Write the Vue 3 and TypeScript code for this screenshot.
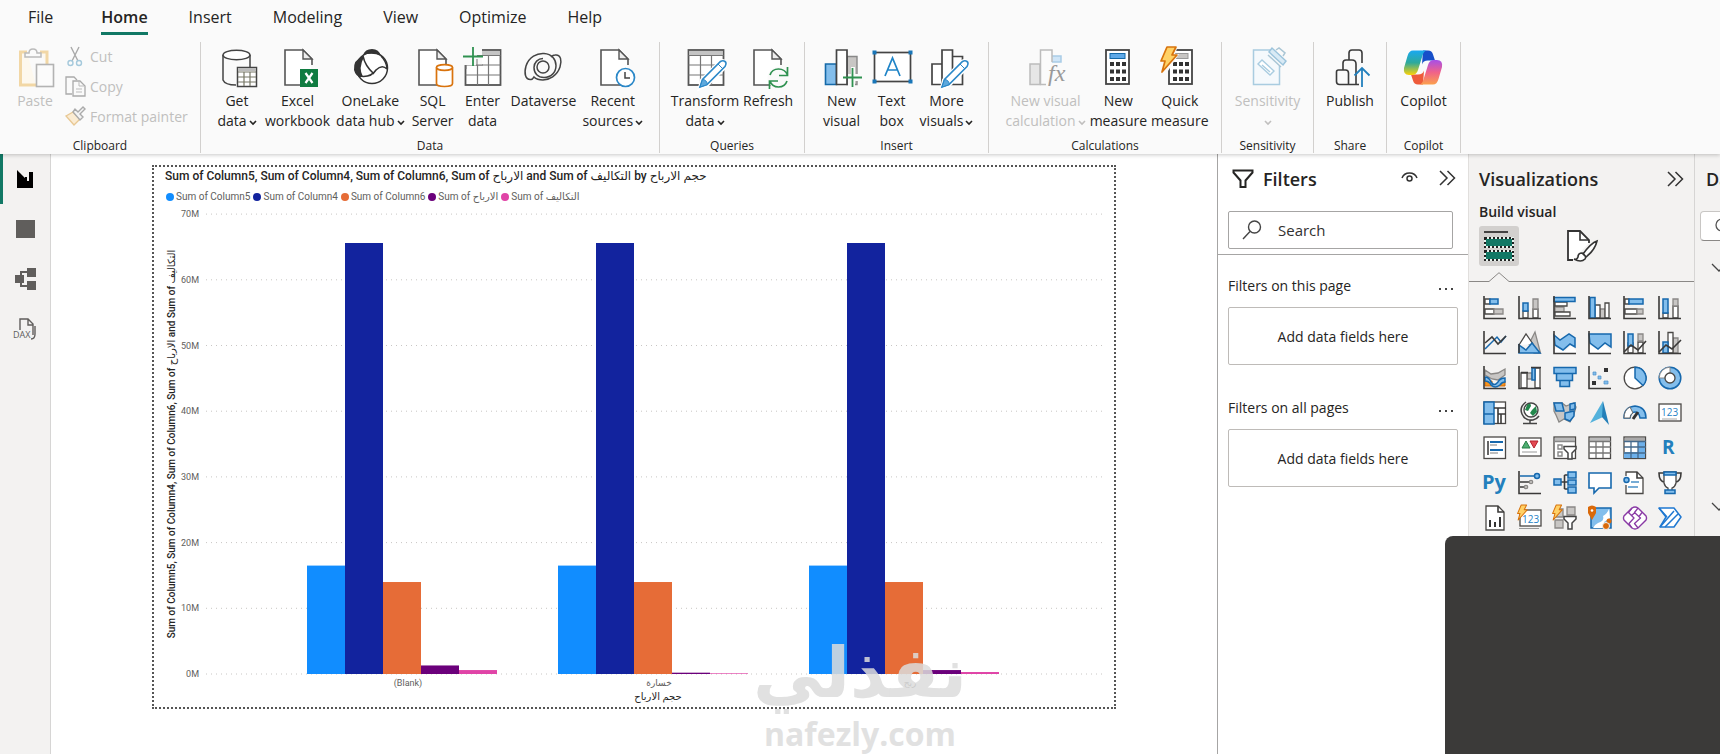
<script setup lang="ts">
interface RibbonItem {
  lines: string[]
  icon: string
  chevron?: boolean
  disabled?: boolean
}
interface RibbonGroup {
  name: string
  key: string
  items: RibbonItem[]
}

const tabs = ['File', 'Home', 'Insert', 'Modeling', 'View', 'Optimize', 'Help']

const pageShape = (x: number) =>
  `<path d="M${x} 3h18l8 9v26h-26z" fill="#fff" stroke="none"/><path d="M${x + 20} 38H${x}V3h18l9 9v6" fill="none" stroke="#555" stroke-width="1.6"/><path d="M${x + 18} 3v9h9z" fill="#eee" stroke="#555" stroke-width="1.4"/>`
const pencil =
  '<path d="M15 41l2-8 18-18q3-2 5 0t0 5l-18 18z" fill="#fff" stroke="#fff" stroke-width="4"/><path d="M15 40l2.500-7.500 18-18q2.500-1.500 4.500 0t0 5l-18 18z" fill="#fff" stroke="#2b88c8" stroke-width="1.600"/><path d="M15 40l2.500-7.500q4 0 5 5z" fill="#5ea9dd" stroke="#2b88c8"/><path d="M33 17l5 5" stroke="#2b88c8"/>'
const calculator = (x: number, screen: string) => {
  let keys = ''
  for (let r = 0; r < 3; r++)
    for (let c = 0; c < 3; c++)
      keys += `<rect x="${x + 4 + c * 6}" y="${15 + r * 7.5}" width="4" height="4" fill="#333"/>`
  return `<rect x="${x}" y="3" width="23" height="34" fill="#fff" stroke="#444" stroke-width="1.8"/><rect x="${x + 4}" y="6.500" width="15" height="5" ${screen}/>${keys}`
}
const bolt = (s: string) =>
  `<path transform="${s}" d="M7 0h9l-4 8h5L2 25l3-11H1z" fill="#ffd166" stroke="#d8730c" stroke-width="1.7" stroke-linejoin="round"/>`
const table = (x: number) =>
  `<rect x="${x}" y="3" width="35" height="35" fill="#fff" stroke="#555" stroke-width="1.800"/><rect x="${x + 1}" y="4" width="33" height="4" fill="#c4c4c4"/><path d="M${x} 8.500h35M${x} 18h35M${x} 28h35M${x + 12} 9v29M${x + 23} 9v29" fill="none" stroke="#777" stroke-width="1.200"/>`

const pasteIcon =
  '<g transform="translate(4 0)"><path d="M8 5H1.500v33H17M21 5h7v13" fill="#fdf8ee" stroke="#f2d7a5" stroke-width="3"/><path d="M6 10V6h4q0-4 4-4t4 4h4v4z" fill="#fafafa" stroke="#bbb" stroke-width="1.500"/><rect x="17.500" y="17.500" width="17" height="22" fill="#fbfbfb" stroke="#b3b3b3" stroke-width="1.600"/></g>'
const smallActions = [
  {
    text: 'Cut',
    icon: '<path d="M6 1l7 14M14 1L7 15" stroke="#a9a9a9" stroke-width="1.400"/><circle cx="5.500" cy="17" r="2.500" fill="none" stroke="#a5c9dc" stroke-width="1.400"/><circle cx="14" cy="17" r="2.500" fill="none" stroke="#a5c9dc" stroke-width="1.400"/>',
  },
  {
    text: 'Copy',
    icon: '<path d="M7 18H1V1h8l3 3" fill="none" stroke="#aaa" stroke-width="1.300"/><path d="M8 5h7l5 5v10H8z" fill="#fafafa" stroke="#aaa" stroke-width="1.300"/><path d="M14 5v5h5M11 13h6M11 16h6" fill="none" stroke="#bbb"/>',
  },
  {
    text: 'Format painter',
    icon: '<path d="M1 10l7-4 7 7-6 6z" fill="#fbecd3" stroke="#e8c894" stroke-width="1.400"/><path d="M8 6l2-3 3 3 5-5 2 2-5 5 3 3-3 3z" fill="#f4f4f4" stroke="#aaa" stroke-width="1.400"/>',
  },
]

const groups: RibbonGroup[] = [
  {
    name: 'Data',
    key: 'data',
    items: [
      {
        lines: ['Get', 'data'],
        chevron: true,
        icon: '<path d="M6 8v25q2 5 13 5M33 8v12" fill="none" stroke="#444" stroke-width="1.500"/><ellipse cx="19.500" cy="8" rx="13.500" ry="4.800" fill="#fff" stroke="#444" stroke-width="1.500"/><rect x="20.500" y="20.500" width="19" height="19" fill="#fff" stroke="#444" stroke-width="1.500"/><rect x="21" y="21" width="18" height="3" fill="#bbb"/><path d="M21 25h18M21 30h18M21 35h18M27 25v14M33 25v14" stroke="#776" stroke-width="1.200"/>',
      },
      {
        lines: ['Excel', 'workbook'],
        icon:
          pageShape(7) +
          '<rect x="22" y="22" width="18" height="18" fill="#107c41"/><path d="M27.500 26l7 10M34.500 26l-7 10" stroke="#fff" stroke-width="2.200"/>',
      },
      {
        lines: ['OneLake', 'data hub'],
        chevron: true,
        icon: '<circle cx="22" cy="21" r="15.500" fill="#fff" stroke="#333" stroke-width="1.500"/><path d="M13 8q2-6 9-6t9 7q-8-4-18-1zM13 9Q3 13 4 23q2 8 9 7-5-9 1-20z" fill="#333"/><path d="M13 9q2 10 11 18M9 29q12 2 17-6 6-6 11-1M31 9q5 5 6 12" fill="none" stroke="#333" stroke-width="1.500"/>',
      },
      {
        lines: ['SQL', 'Server'],
        icon:
          pageShape(6) +
          '<path d="M23.500 20.500v16q0 3 8 3t8-3v-16" fill="#fff" stroke="#d9730d" stroke-width="1.700"/><ellipse cx="31.500" cy="20.500" rx="8" ry="2.800" fill="#fff" stroke="#d9730d" stroke-width="1.700"/>',
      },
      {
        lines: ['Enter', 'data'],
        icon:
          table(2.5) +
          '<path d="M0 1h19v17H0z" fill="#fafafa"/><path d="M13 18h7M3 18v4M14 12v7M14 8.500h7" stroke="#777"/><path d="M0 9.500h20M10 0v19" stroke="#2f9150" stroke-width="1.800"/>',
      },
      {
        lines: ['Dataverse'],
        icon: '<g fill="none" stroke="#444" stroke-width="1.500"><circle cx="20" cy="20" r="6"/><path d="M8 32.500C2 33 1 26 3 19 6 10 14 6 21 6.500c8 .5 12 6 12 12 0 7-5 12-12 12-6 0-10-4-10-10 0-5 4-9 9-9"/><path d="M32 8c6-1 7 6 5 12-3 9-11 13-17 13-4 0-7-1-9-3-1 1.500-2 2.500-3 2.500M32 8c-2 0-3 1-4 2"/></g>',
      },
      {
        lines: ['Recent', 'sources'],
        chevron: true,
        icon:
          pageShape(8) +
          '<circle cx="32.500" cy="30.500" r="9" fill="#fff" stroke="#2b88c8" stroke-width="1.700"/><path d="M32 25v6h5" fill="none" stroke="#444" stroke-width="1.500"/>',
      },
    ],
  },
  {
    name: 'Queries',
    key: 'queries',
    items: [
      { lines: ['Transform', 'data'], chevron: true, icon: table(3.5) + pencil },
      {
        lines: ['Refresh'],
        icon:
          pageShape(6) +
          '<circle cx="30.500" cy="31" r="11" fill="#fafafa"/><path d="M22 28q2-6 8.500-6t9 6M39.500 20v8.500H31M39 34q-2 6-8.500 6t-8.500-6M21.500 42v-8H30" fill="none" stroke="#2f9150" stroke-width="1.700"/>',
      },
    ],
  },
  {
    name: 'Insert',
    key: 'insert',
    items: [
      {
        lines: ['New', 'visual'],
        icon: '<path d="M25 9.500h10v28H25z" fill="#c8c6c4" stroke="#888" stroke-width="1.400"/><path d="M3.500 17h11v20.500h-11z" fill="#83beec" stroke="#1469a8" stroke-width="1.600"/><path d="M14.500 3h10.500v34.500H14.500z" fill="#fff" stroke="#444" stroke-width="1.700"/><path d="M26 27h3v-7h4v7h6v7h-6v5h-7z" fill="#fafafa"/><path d="M21 30.500h19M30.500 21v19" stroke="#2f9150" stroke-width="1.800"/>',
      },
      {
        lines: ['Text', 'box'],
        icon: '<rect x="2.500" y="5.500" width="36" height="29" fill="#fff" stroke="#444" stroke-width="1.700"/><path d="M.5 3.500h4v4h-4zM36.500 3.500h4v4h-4zM.5 32.500h4v4h-4zM36.500 32.500h4v4h-4z" fill="#1976b8"/><path d="M13 29l7.500-18L28 29M15.500 23h10" fill="none" stroke="#1f84c7" stroke-width="1.700"/>',
      },
      {
        lines: ['More', 'visuals'],
        chevron: true,
        icon:
          '<path d="M5 17h10v20.500H5zM25.500 9.500h10v28h-10zM15 3h10.500v34.500H15z" fill="#fff" stroke="#444" stroke-width="1.700"/>' +
          pencil,
      },
    ],
  },
  {
    name: 'Calculations',
    key: 'calculations',
    items: [
      {
        lines: ['New visual', 'calculation'],
        chevron: true,
        disabled: true,
        icon: '<path d="M4 17h10v20.500H4z" fill="#e6e6e6" stroke="#bcbcbc" stroke-width="1.500"/><path d="M25 9h10v6H25z" fill="#cfe5f7" stroke="#a9cce6" stroke-width="1.500"/><path d="M26 15V3H14.500v34.500H20" fill="#fbfbfb" stroke="#bcbcbc" stroke-width="1.500"/><text x="22" y="34" font-family="Liberation Serif, serif" font-style="italic" font-size="24" fill="#999">fx</text>',
      },
      { lines: ['New', 'measure'], icon: calculator(8, 'fill="#5ea9e8" stroke="#1469a8"') },
      {
        lines: ['Quick', 'measure'],
        icon:
          calculator(9, 'fill="#c8c6c4" stroke="#999"') +
          '<path d="M6-1h12l-3 8h4L6 27-1 25z" fill="#fafafa"/>' +
          bolt(''),
      },
    ],
  },
  {
    name: 'Sensitivity',
    key: 'sensitivity',
    items: [
      {
        lines: ['Sensitivity', ''],
        chevron: true,
        disabled: true,
        icon: '<path d="M24 3H6.500v34.500h26V19" fill="#f5f9fc" stroke="#a9cce0" stroke-width="1.500"/><path d="M11 17l4-4 12 11-4 4zM15 18l8 7" fill="#fff" stroke="#a9cce0" stroke-width="1.400"/><path d="M22 5l3-4 14 13-3 4z" fill="#d9eaf5" stroke="#9cc4dc" stroke-width="1.500"/><path d="M21 8l13 12M29 3l3-2 6 5-2 3" fill="none" stroke="#aac6d5" stroke-width="1.500"/>',
      },
    ],
  },
  {
    name: 'Share',
    key: 'share',
    items: [
      {
        lines: ['Publish'],
        icon: '<path d="M19 13V6q0-3 3-3h7q3 0 3 3v10M13 23v-7q0-3 3-3h6q4 0 4 4v20M8.500 23h7q3 0 3 3v11.500h-9q-3 0-3-3V25q0-2 2-2zM18 37.500h11" fill="none" stroke="#3b3b3b" stroke-width="1.600"/><path d="M32 40V21M24.500 28.500L32 21l7.500 7.500" fill="none" stroke="#2380bd" stroke-width="1.800"/>',
      },
    ],
  },
  {
    name: 'Copilot',
    key: 'copilot',
    items: [
      {
        lines: ['Copilot'],
        icon: '<defs><linearGradient id="ca" x1="0" y1="0" x2="0" y2="1"><stop offset="0" stop-color="#18a8f2"/><stop offset=".5" stop-color="#2ea99b"/><stop offset="1" stop-color="#fdd207"/></linearGradient><linearGradient id="cb" x1="0" y1="0" x2="0" y2="1"><stop offset="0" stop-color="#a64fe8"/><stop offset=".5" stop-color="#f0628a"/><stop offset="1" stop-color="#fba04c"/></linearGradient></defs><path d="M20 3.500h5q4 0 5 4l2 6h-7q-5 0-6 4z" fill="#174fc9"/><path d="M20 37.500h-5q-4 0-5-4l-2-6h7q5 0 6-4z" fill="#ee5b3a"/><path d="M10 3.500h14q-3 0-4.500 5L15 23q-1.500 5-6 5H6q-6 0-5-7L4.500 9Q6 3.500 10 3.500z" fill="url(#ca)"/><path d="M30 37.500H16q3 0 4.500-5L25 18q1.500-5 6-5h3q6 0 5 7l-3.500 12q-1.500 5.500-5.500 5.500z" fill="url(#cb)"/>',
      },
    ],
  },
]

const rail = [
  {
    label: 'Report view',
    icon: '<path d="M2 2l3 3 5 5V9h2v4h2V4h4v16H2z" fill="#000"/>',
  },
  { label: 'Table view', icon: '<path d="M1 2h19v18H1z" fill="#605e5c"/>' },
  {
    label: 'Model view',
    icon: '<path d="M6 8V4h6M6 14v4h7" fill="none" stroke="#605e5c" stroke-width="2"/><path d="M0 7h9v8H0zM12 0h9v9h-9zM12 13h9v9h-9z" fill="#605e5c"/>',
  },
  {
    label: 'DAX query view',
    icon: '<path d="M5 12V1h8l5 5v11M13 1v6h5M20 8v8q0 5-4 5" fill="none" stroke="#605e5c" stroke-width="1.400"/><text x="-2" y="20" font-family="Open Sans, sans-serif" font-size="9" fill="#605e5c">DAX</text>',
  },
]

// Chart data, in millions
const series = [
  { name: 'Sum of Column5', color: '#118dff' },
  { name: 'Sum of Column4', color: '#12239e' },
  { name: 'Sum of Column6', color: '#e66c37' },
  { name: 'Sum of الارباح', color: '#6b007b' },
  { name: 'Sum of التكاليف', color: '#e044a7' },
]
const categories = [
  { name: '(Blank)', values: [16.5, 65.6, 14, 1.3, 0.6] },
  { name: 'خسارة', values: [16.5, 65.6, 14, 0.2, 0.1] },
  { name: 'ربح', values: [16.5, 65.6, 14, 0.6, 0.3] },
]
const ticks = [70, 60, 50, 40, 30, 20, 10, 0]
const baseline = 468
const perMillion = 6.57
const barWidth = 38
const groupX = (i: number) => 153 + i * 251
const yOf = (v: number) => baseline - v * perMillion

// Visual gallery
const B = 'fill="#83beec" stroke="#1668ad" stroke-width="1.500"'
const G = 'fill="#c8c6c4" stroke="#8a8886" stroke-width="1.300"'
const W = 'fill="#fff" stroke="#4a4846" stroke-width="1.300"'
const N = 'fill="none" stroke="#3b3a39" stroke-width="1.600"'
const NG = 'fill="none" stroke="#888" stroke-width="1.400"'
const axes = `<path d="M1 0v22.500h22" ${N}/>`
const frame = `<rect x="1" y="1" width="21.500" height="21.500" ${W}/>`
const miniBolt = bolt('translate(-1 -1) scale(.6)')
const funnel = `<path d="M11 10.500h12v2.500l-4 4v6h-4v-6l-4-4z" fill="#fff" stroke="#444" stroke-width="1.500"/>`

const visuals: { name: string; icon: string }[] = [
  { name: 'Stacked bar chart', icon: `<path d="M2 3h5v5H2zM2 13h9v5H2z" ${W}/><path d="M7 3h8v5H7z" ${B}/><path d="M11 13h9v5h-9z" ${G}/>${axes}` },
  { name: 'Stacked column chart', icon: `<path d="M5 15h5v7H5zM15 13h5v9h-5z" ${W}/><path d="M5 7h5v8H5z" ${B}/><path d="M15 3h5v10h-5z" ${G}/>${axes}` },
  { name: 'Clustered bar chart', icon: `<path d="M2 11h9v5H2z" ${G}/><path d="M2 6h12v4H2zM2 16h15v4H2z" ${W}/><path d="M1 1.500h21v4H1z" ${B}/>${axes}` },
  { name: 'Clustered column chart', icon: `<path d="M12 13h5v9h-5z" ${G}/><path d="M7 9h5v13H7zM17 7h4v15h-4z" ${W}/><path d="M2 1.500h5V22H2z" ${B}/>${axes}` },
  { name: '100% stacked bar chart', icon: `<path d="M2 3h4v5H2zM2 13h12v5H2z" ${W}/><path d="M6 3h14v5H6z" ${B}/><path d="M14 13h6v5h-6z" ${G}/>${axes}` },
  { name: '100% stacked column chart', icon: `<path d="M5 17h5v5H5zM15 10h5v12h-5z" ${W}/><path d="M5 3h5v14H5z" ${B}/><path d="M15 3h5v7h-5z" ${G}/>${axes}` },
  { name: 'Line chart', icon: `<path d="M2 18l12-12 4 5 5-6" fill="none" stroke="#1668ad" stroke-width="1.500"/><path d="M2 12l7-6 6 7 8-8" ${N}/>${axes}` },
  { name: 'Area chart', icon: `<path d="M11 13l6-12 5.500 21H16z" ${G}/><path d="M1 14L8 3l7 10" ${W}/><path d="M1 14l7 5 6-7 8 10H1z" ${B}/><path d="M1 13v9" ${N}/>` },
  { name: 'Stacked area chart', icon: `<path d="M2 18l5-3 5 5 6-6 5 5v3H2z" fill="#fff"/><path d="M1 4l6 5 9-6 6 4v9l-5-3-7 6-8-5z" ${B}/>${axes}` },
  { name: '100% stacked area chart', icon: `<path d="M2 14l8 5 6-6 6 6v3H2z" fill="#fff"/><path d="M1 3h22v13l-6-4-7 6-8-6z" ${B}/>${axes}` },
  { name: 'Line and stacked column chart', icon: `<path d="M5 12h5v10H5zM15 11h5v11h-5z" ${W}/><path d="M5 3h5v12H5z" ${B}/><path d="M15 3h5v7h-5z" ${G}/><path d="M1 21l7-7 7 5 8-9" ${N}/>${axes}` },
  { name: 'Line and clustered column chart', icon: `<path d="M15 7h5v15h-5z" ${G}/><path d="M10 1.500h5V22h-5z" ${W}/><path d="M5 11h5v11H5z" ${B}/><path d="M1 21l7-7 6 4 9-9" ${N}/>${axes}` },
  { name: 'Ribbon chart', icon: `<path d="M2 4l6 4 7-1 7-4v6l-7 5-6-1-7-4z" ${G}/><path d="M2 15h7v5H2zM16 15h6v5h-6z" fill="#f7941d" stroke="#d36b08"/><path d="M2 11q4 0 6 5 3 5 7 0 2-4 7-4v4q-3 0-5 3-5 4-9 0-2-4-6-4z" ${B}/>${axes}` },
  { name: 'Waterfall chart', icon: `<path d="M9 7h5v6H9z" ${G}/><path d="M3 7h6v15H3zM17 2h5v20h-5z" ${W}/><path d="M14 2h3v12h-3z" ${B}/><path d="M1 0v22.500h22M3 6.500h7M13 1.500h10" ${N}/>` },
  { name: 'Funnel', icon: `<path d="M1 1.500h22v6H1zM3.500 7.500h16v7h-16zM7 14.500h9.500v6H7z" ${B}/>` },
  { name: 'Scatter chart', icon: `<path d="M5 6h3v3H5zM10 10h3v3h-3zM16 15h4v3h-4z" fill="#83beec" stroke="#4b91c8" stroke-width=".7"/><path d="M16 2h4v4h-4zM4 15h4v4H4z" fill="#333"/>${axes}` },
  { name: 'Pie chart', icon: `<circle cx="12" cy="12" r="10.800" ${W}/><path d="M12 1.200V12l8 7.500A10.800 10.800 0 0 0 12 1.200z" ${B}/>` },
  { name: 'Donut chart', icon: `<circle cx="12" cy="12" r="10.800" ${B}/><path d="M1.200 12A10.800 10.800 0 0 1 12 1.200V7a5 5 0 0 0-5 5z" fill="#fff" stroke="#888"/><circle cx="12" cy="12" r="5" ${W}/>` },
  { name: 'Treemap', icon: `${frame}<path d="M1 1h10v12H1zM1 13h10v10H1z" ${B}/><path d="M11 7h12M15 7v16M15 13h8M18 13v10" ${N}/>` },
  { name: 'Map', icon: `<circle cx="13" cy="9" r="7" fill="#fff" stroke="#444" stroke-width="1.400"/><path d="M9 4q4-3 4 1l-3 5-3-1zM14 9l4-4 1 6-4 4-3-3z" fill="#22884c"/><path d="M8 1Q1 6 4 13t11 6q4-1 6-4M12 19v3M5 22.500h14" fill="none" stroke="#444" stroke-width="1.500"/>` },
  { name: 'Filled map', icon: `<path d="M1 2h8l4 3 8-3 2 4-2 7-4 8-6-3-5 3-3-7-2-4z" ${G}/><path d="M1 2h8l2 8H3zM12 12l9-2v5l-4 5-5-2zM17 3l5-1v6l-5 1z" ${B}/>` },
  { name: 'Azure map', icon: `<path d="M15 0L2 22l13-6z" fill="#54b2dc"/><path d="M15 0l6 24-7-8z" fill="#237fb8"/>` },
  { name: 'Gauge', icon: `<path d="M1 17q0-11 11-12 11 1 11 12h-6q-1-6-5-6t-5 6z" ${B}/><path d="M1 17h6q0-4 3-5L7 6q-6 3-6 11z" fill="#fff" stroke="#666"/><path d="M10 18l5-7" stroke="#333" stroke-width="3"/>` },
  { name: 'Card', icon: `<rect x="1" y="3" width="22" height="17" ${W}/><text x="3" y="15" font-family="Open Sans, sans-serif" font-size="10" fill="#1f84c7">123</text><path d="M4 18h15" stroke="#aaa"/>` },
  { name: 'Multi-row card', icon: `${frame}<path d="M5 5v14" stroke="#333" stroke-width="1.500"/><path d="M7 6h13M7 14h13" stroke="#1668ad" stroke-width="2.200"/><path d="M7 9h7M7 17h8" stroke="#aaa" stroke-width="1.500"/>` },
  { name: 'KPI', icon: `<rect x="1" y="2" width="22" height="18" ${W}/><path d="M4 12l4-7 4 7z" fill="#4fae72" stroke="#257f45"/><path d="M12 5h8l-4 7z" fill="#e34a53" stroke="#b5222e"/><path d="M4 16h15" stroke="#999"/>` },
  { name: 'Slicer', icon: `${frame}<path d="M2 2h20v3H2z" fill="#bbb"/><path d="M1 5.500h21M5 9h4v4H5zM5 16h4v4H5z" ${NG}/>${funnel}` },
  { name: 'Table', icon: `${frame}<path d="M2 2h20v3H2z" fill="#bbb"/><path d="M1 5.500h22M1 11h22M1 17h22M8 6v16M15 6v16" fill="none" stroke="#777" stroke-width="1.300"/>` },
  { name: 'Matrix', icon: `${frame}<path d="M15 5h7v17H1v-6h14z" fill="#6db0ea"/><path d="M2 2h20v3H2z" fill="#aaa"/><path d="M1 5.500h22M1 11h22M1 17h22M8 6v16M15 6v16" fill="none" stroke="#44698c" stroke-width="1.300"/>` },
  { name: 'R script visual', icon: '<text x="4" y="18" font-family="Open Sans, sans-serif" font-weight="700" font-size="19" fill="#2380bd">R</text>' },
  { name: 'Python visual', icon: '<text x="-1" y="18" font-family="Open Sans, sans-serif" font-weight="700" font-size="20" fill="#2380bd">Py</text>' },
  { name: 'Key influencers', icon: `<path d="M2 5h14" stroke="#1668ad" stroke-width="1.500"/><circle cx="19" cy="5" r="2.500" ${B}/><path d="M2 11h9M2 16h4" ${N}/><circle cx="13" cy="11" r="1.700" ${G}/><circle cx="8" cy="16" r="1.700" ${G}/>${axes}` },
  { name: 'Decomposition tree', icon: `<path d="M8 11h7M11.500 4v14M11.500 4H15M11.500 18H15" ${N}/><path d="M1 8h7v6H1zM15 1h8v6h-8zM15 9h8v5h-8zM15 16h8v6h-8z" ${B}/>` },
  { name: 'Q&A', icon: `<path d="M1 2h22v15H11l-5 5v-5H1z" fill="#fff" stroke="#1668ad" stroke-width="1.600"/>` },
  { name: 'Smart narrative', icon: `<path d="M3 5V1h11l6 6v15.500H3V14" ${W}/><path d="M14 1v6h6" ${N}/><circle cx="3.500" cy="9" r="2.500" ${B}/><path d="M8 11h8M5 16h10" stroke="#4b91c8" stroke-width="1.400"/>` },
  { name: 'Metrics', icon: `<path d="M6 2H1q0 9 6 9M18 2h5q0 9-6 9" ${N}/><path d="M6 1h12v11q-1 4-4 5v3h-4v-3q-3-1-4-5z" ${W}/><path d="M6 1h12v3H6zM7 19h10v3.500H7z" ${B}/>` },
  { name: 'Paginated report', icon: `<path d="M3 0h12l6 6v18H3z" ${W}/><path d="M15 0v6h6" ${N}/><path d="M6 14h2v7H6zM11 16h2v5h-2zM16 11h2v10h-2z" fill="#333"/>` },
  { name: 'Card (new)', icon: `<rect x="2" y="4" width="21" height="16" ${W}/><text x="4" y="17" font-family="Open Sans, sans-serif" font-size="10" fill="#1f84c7">123</text><path d="M1 22.500h20" stroke="#999"/>${miniBolt}` },
  { name: 'Slicer (new)', icon: `<path d="M3 3h7v8H3zM14 1h8v8h-8zM2 14h8v8H2z" ${G}/>${funnel}${miniBolt}` },
  { name: 'ArcGIS Maps', icon: `<path d="M3 2h20v20H3z" ${B}/><path d="M21 3q-2 5-6 7 2 5-5 7-4 2-5 5h12l-1-6 6-4z" fill="#fff"/><path d="M0 1q4-3 8 0v6l-4 7-4-7z" fill="#d9690a"/><circle cx="4" cy="4.500" r="1.300" fill="#fff"/><circle cx="21" cy="15" r="2.500" fill="#d9690a"/><circle cx="18" cy="20" r="3.500" fill="#d9690a" stroke="#f3f2f1"/>` },
  { name: 'Power Apps', icon: `<path d="M9 2q3-2 6 0l8 8q1 2 0 4l-8 8q-3 2-6 0l-8-8q-1-2 0-4z" fill="#fff" stroke="#8a3aa5" stroke-width="1.400"/><path d="M9 2l-3.500 4.500 5.500 5.500-5 5.500L9 22M15 2l-3.500 4.500 6 5.500-6 5.500L15 22M12 6.500L8 10M16 10.500l3-4" fill="none" stroke="#8a3aa5" stroke-width="1.300" stroke-linejoin="round"/>` },
  { name: 'Power Automate', icon: `<path d="M1 2h15l7 9-7 10H2l6-10z" fill="#fff" stroke="#1f78d1" stroke-width="1.500" stroke-linejoin="round"/><path d="M2 21L16 5M7 21L20 8M1 2l8 9" fill="none" stroke="#1f78d1" stroke-width="1.500"/>` },
]
</script>

<template>
  <div class="app">
    <header class="ribbon">
      <nav class="tabs">
        <button v-for="t in tabs" :key="t" class="tab" :class="{ active: t === 'Home' }">{{ t }}</button>
      </nav>
      <div class="groups">
        <section class="group clipboard">
          <div class="items">
            <button class="big disabled" disabled>
              <svg class="big-icon" viewBox="0 0 40 40" v-html="pasteIcon" />
              <span class="line">Paste</span>
            </button>
            <div class="smalls">
              <button v-for="a in smallActions" :key="a.text" class="small" disabled>
                <svg width="21" height="21" viewBox="0 0 21 21" v-html="a.icon" />
                {{ a.text }}
              </button>
            </div>
          </div>
          <h2 class="group-name">Clipboard</h2>
        </section>
        <section v-for="g in groups" :key="g.key" class="group" :class="g.key">
          <div class="items">
            <button v-for="b in g.items" :key="b.lines.join(' ')" class="big" :class="{ disabled: b.disabled }" :disabled="b.disabled">
              <svg class="big-icon" viewBox="0 0 40 40" v-html="b.icon" />
              <span v-for="(l, i) in b.lines" :key="i" class="line">{{ l }}<svg v-if="b.chevron && i === b.lines.length - 1" class="chev" width="8" height="6" viewBox="0 0 8 6"><path d="M1 1l3 3 3-3" fill="none" stroke="currentColor" stroke-width="1.600" /></svg></span>
            </button>
          </div>
          <h2 class="group-name">{{ g.name }}</h2>
        </section>
      </div>
    </header>

    <main class="workspace">
      <nav class="rail">
        <button v-for="(r, i) in rail" :key="r.label" class="rail-item" :class="{ current: i === 0 }" :aria-label="r.label">
          <svg width="22" height="22" viewBox="0 0 22 22" v-html="r.icon" />
        </button>
      </nav>

      <section class="canvas">
        <figure class="chart">
          <figcaption class="chart-title">Sum of Column5, Sum of Column4, Sum of Column6, Sum of الارباح and Sum of التكاليف by حجم الارباح</figcaption>
          <ul class="legend">
            <li v-for="s in series" :key="s.name">
              <svg width="8" height="8" viewBox="0 0 8 8"><circle cx="4" cy="4" r="4" :fill="s.color" /></svg>{{ s.name }}
            </li>
          </ul>
          <svg class="plot" viewBox="0 0 960 501">
            <g v-for="t in ticks" :key="t">
              <line x1="52" x2="951" :y1="yOf(t)" :y2="yOf(t)" class="gridline" />
              <text x="45" :y="yOf(t) + 3" class="tick" text-anchor="end">{{ t }}M</text>
            </g>
            <g v-for="(c, i) in categories" :key="c.name">
              <rect
                v-for="(v, j) in c.values"
                :key="j"
                :x="groupX(i) + j * barWidth"
                :y="yOf(v)"
                :width="barWidth"
                :height="v * perMillion"
                :fill="series[j].color"
              />
              <text :x="groupX(i) + 101" y="480" class="tick" text-anchor="middle">{{ c.name }}</text>
            </g>
            <text x="504" y="494" class="axis-title" text-anchor="middle">حجم الارباح</text>
            <text transform="translate(21 238) rotate(-90)" class="axis-title" text-anchor="middle">Sum of Column5, Sum of Column4, Sum of Column6, Sum of الارباح and Sum of التكاليف</text>
          </svg>
          <div class="watermark">
            <span class="wm-ar" lang="ar">نفذلي</span>
            <span class="wm-en">nafezly.com</span>
          </div>
        </figure>
      </section>

      <aside class="filters">
        <div class="filters-top">
          <header class="pane-head">
            <svg width="22" height="20" viewBox="0 0 22 20"><path d="M1.500 1.500h19v2l-7 8V18h-5v-6.500l-7-8z" fill="none" stroke="#252423" stroke-width="2" /></svg>
            <h2>Filters</h2>
            <button class="icon-btn eye" aria-label="Show filters">
              <svg width="17" height="14" viewBox="0 0 17 14"><path d="M1 6q2-5 7.500-5T16 6" fill="none" stroke="#333" stroke-width="1.500" /><circle cx="8.500" cy="6.500" r="2.500" fill="none" stroke="#333" stroke-width="1.500" /></svg>
            </button>
            <button class="icon-btn" aria-label="Collapse filters">
              <svg width="17" height="18" viewBox="0 0 17 18"><path d="M1 1l7 7-7 7M8.500 1l7 7-7 7" fill="none" stroke="#333" stroke-width="1.500" /></svg>
            </button>
          </header>
          <label class="search">
            <svg width="20" height="20" viewBox="0 0 20 20"><circle cx="12.500" cy="7" r="6" fill="none" stroke="#444" stroke-width="1.400" /><path d="M8 11.500L1 19" stroke="#444" stroke-width="1.400" /></svg>
            <input type="text" placeholder="Search" aria-label="Search filters" />
          </label>
        </div>
        <section v-for="f in ['Filters on this page', 'Filters on all pages']" :key="f" class="filter-section">
          <div class="filter-head">
            <h3>{{ f }}</h3>
            <button class="icon-btn" aria-label="More options">
              <svg width="15" height="4" viewBox="0 0 15 4"><path d="M0 1h2v2H0zM6 1h2v2H6zM12 1h2v2h-2z" fill="#444" /></svg>
            </button>
          </div>
          <div class="drop">Add data fields here</div>
        </section>
      </aside>

      <aside class="visualizations">
        <header class="pane-head">
          <h2>Visualizations</h2>
          <button class="icon-btn" aria-label="Collapse visualizations">
            <svg width="17" height="16" viewBox="0 0 17 16"><path d="M1 1l7 7-7 7M8.500 1l7 7-7 7" fill="none" stroke="#333" stroke-width="1.500" /></svg>
          </button>
        </header>
        <h3 class="build-title">Build visual</h3>
        <div class="modes">
          <button class="mode selected" aria-label="Build visual">
            <svg width="32" height="32" viewBox="0 0 32 32"><path d="M1 2h24" stroke="#333" stroke-width="1.800" /><path d="M2 8h28v9H2zM2 21h28v9H2z" fill="#117865" stroke="#e8f3ee" stroke-width="2" /><path d="M2 8h28v9H2zM2 21h28v9H2z" fill="none" stroke="#222" stroke-width="2" stroke-dasharray="2 2" /></svg>
          </button>
          <button class="mode" aria-label="Format visual">
            <svg width="32" height="32" viewBox="0 0 32 32"><path d="M7 30H2V1h12l9 9v3" fill="#fff" stroke="#333" stroke-width="1.800" /><path d="M14 1v9h9" fill="none" stroke="#333" stroke-width="1.600" /><path d="M31 11q-6 2-14 13l3 3q9-7 11-16zM16 23q-4 0-4 4-1 3-4 2 7 4 11 0 2-3-3-6z" fill="#fff" stroke="#333" stroke-width="1.600" /></svg>
          </button>
        </div>
        <div class="notch">
          <i class="rule first" />
          <svg width="20" height="10" viewBox="0 0 20 10"><path d="M0 9.500L10 .7l10 8.800" fill="none" stroke="#8a8886" /></svg>
          <i class="rule" />
        </div>
        <div class="gallery">
          <button v-for="v in visuals" :key="v.name" class="visual" :aria-label="v.name">
            <svg width="24" height="24" viewBox="0 0 24 24" v-html="v.icon" />
          </button>
        </div>
      </aside>

      <aside class="data-pane">
        <h2>Data</h2>
        <label class="data-search">
          <svg width="16" height="16" viewBox="0 0 16 16"><circle cx="7" cy="7" r="6" fill="none" stroke="#555" stroke-width="1.300" /></svg>
          <input type="text" aria-label="Search data" />
        </label>
        <button class="icon-btn expand" aria-label="Expand table">
          <svg width="16" height="9" viewBox="0 0 16 9"><path d="M1 1l7 7 7-7" fill="none" stroke="#444" stroke-width="1.300" /></svg>
        </button>
        <button class="icon-btn expand later" aria-label="Expand table">
          <svg width="16" height="9" viewBox="0 0 16 9"><path d="M1 1l7 7 7-7" fill="none" stroke="#444" stroke-width="1.300" /></svg>
        </button>
      </aside>
    </main>
    <div class="overlay" />
  </div>
</template>

<style>
body {
  margin: 0;
  overflow: hidden;
}
</style>

<style scoped>
.app {
  display: flex;
  flex-direction: column;
  height: 100vh;
  overflow: hidden;
  position: relative;
  font-family: 'Open Sans', 'DejaVu Sans', sans-serif;
  color: #252423;
  background: #fff;
}
.app *,
.app *::before {
  box-sizing: border-box;
}
h2,
h3,
ul,
figure {
  margin: 0;
  padding: 0;
}
button {
  font: inherit;
  color: inherit;
  background: none;
  border: 0;
  padding: 0;
}
svg {
  display: block;
  flex: none;
  overflow: visible;
}

.ribbon {
  background: #fafafa;
  height: 154px;
  flex: none;
  box-shadow: 0 1px 4px rgba(0, 0, 0, 0.22);
  z-index: 1;
}
.tabs {
  display: flex;
  gap: 41px;
  height: 42px;
  padding-left: 28px;
}
.tab {
  height: 35px;
  padding-top: 2px;
  font-size: 16px;
  line-height: 30px;
  border-bottom: 3px solid transparent;
}
.tab:first-child {
  margin-right: 7px;
}
.tab.active {
  font-weight: 600;
  border-bottom-color: #117865;
}
.groups {
  display: flex;
  height: 111px;
}
.group {
  display: flex;
  flex: none;
  flex-direction: column;
  padding-top: 5px;
  border-right: 1px solid #d2d0ce;
}
.items {
  display: flex;
  justify-content: center;
}
.clipboard {
  width: 201px;
}
.clipboard .items {
  justify-content: flex-start;
  padding-left: 10px;
}
.data {
  width: 459px;
}
.data .items {
  padding-right: 2px;
}
.queries {
  width: 145px;
}
.insert {
  width: 184px;
}
.calculations {
  width: 233px;
}
.calculations .items {
  padding-left: 4px;
}
.sensitivity {
  width: 92px;
}
.share {
  width: 73px;
}
.copilot {
  width: 74px;
}
.group-name {
  margin-top: auto;
  text-align: center;
  font-size: 12px;
  line-height: 15px;
  font-weight: 400;
}
.big {
  display: flex;
  flex-direction: column;
  align-items: center;
  min-width: 50px;
  padding: 0 3px;
  font-size: 14px;
  line-height: 20px;
  white-space: nowrap;
}
.queries .big,
.calculations .big {
  padding: 0 2px;
}
.big-icon {
  width: 40px;
  height: 40px;
  margin-bottom: 4px;
}
.disabled,
.small {
  color: #c0bfbe;
}
.line {
  display: flex;
  align-items: center;
  min-height: 20px;
}
.chev {
  margin-left: 2px;
  margin-top: 3px;
}
.smalls {
  display: flex;
  flex-direction: column;
  padding-left: 5px;
}
.small {
  display: flex;
  align-items: center;
  gap: 4px;
  height: 30px;
  padding-bottom: 12px;
  font-size: 14px;
  white-space: nowrap;
}

.workspace {
  display: flex;
  flex: 1;
  min-height: 0;
}
.rail {
  width: 51px;
  flex: none;
  background: #f3f2f1;
  border-right: 1px solid #d6d5d4;
}
.rail-item {
  display: flex;
  align-items: center;
  justify-content: center;
  width: 100%;
  height: 50px;
  border-left: 3px solid transparent;
  padding-right: 1px;
}
.rail-item.current {
  border-left-color: #117865;
}

.canvas {
  flex: 1;
  min-width: 0;
  padding: 11px 101px 0;
}
.chart {
  position: relative;
  border: 2px dotted #555;
}
.chart-title {
  padding: 0 11px;
  font-family: Roboto, 'DejaVu Sans', sans-serif;
  font-size: 12px;
  font-weight: 500;
  line-height: 18px;
  white-space: nowrap;
}
.legend {
  display: flex;
  gap: 3px;
  height: 21px;
  padding: 3px 12px 0;
  list-style: none;
  font-family: Roboto, 'DejaVu Sans', sans-serif;
  font-size: 10px;
  line-height: 18px;
  color: #605e5c;
  white-space: nowrap;
}
.legend li {
  display: flex;
  align-items: center;
  gap: 2px;
}
.plot {
  width: 100%;
  height: auto;
}
.gridline {
  stroke: #c8c6c4;
  stroke-width: 1;
  stroke-dasharray: 1 4;
}
.tick {
  font-family: Roboto, 'DejaVu Sans', sans-serif;
  font-size: 9px;
  fill: #605e5c;
}
.axis-title {
  font-family: Roboto, 'DejaVu Sans', sans-serif;
  font-size: 10px;
  font-weight: 500;
  fill: #252423;
}
.watermark {
  position: absolute;
  left: 599px;
  top: 462px;
  width: 214px;
  display: flex;
  flex-direction: column;
  align-items: center;
  color: #dcdcdc;
  opacity: 0.85;
  font-weight: 700;
  white-space: nowrap;
}
.wm-ar {
  font-family: 'DejaVu Sans', sans-serif;
  font-size: 70px;
  line-height: 88px;
}
.wm-en {
  font-family: 'Open Sans', sans-serif;
  font-size: 32px;
  line-height: 34px;
}

.filters {
  width: 251px;
  flex: none;
  border-left: 1px solid #a6a5a4;
}
.filters-top {
  height: 101px;
  border-bottom: 1px solid #a6a5a4;
}
.pane-head {
  display: flex;
  align-items: center;
  height: 50px;
  padding: 0 12px 0 14px;
}
.pane-head h2 {
  flex: 1;
  font-size: 18px;
  font-weight: 600;
}
.filters .pane-head h2 {
  margin-left: 9px;
}
.eye {
  margin-right: 21px;
}
.search {
  display: flex;
  align-items: center;
  gap: 16px;
  margin: 7px 15px 0 10px;
  height: 38px;
  padding-left: 13px;
  border: 1px solid #a6a5a4;
  border-radius: 2px;
}
.search input {
  flex: 1;
  min-width: 0;
  border: 0;
  padding: 0;
  outline: 0;
  background: none;
  font: inherit;
  font-size: 15px;
}
.search input::placeholder {
  color: #323130;
  opacity: 1;
}
.filter-section {
  padding: 18px 10px 0;
  height: 122px;
}
.filter-head {
  display: flex;
  align-items: center;
  justify-content: space-between;
  height: 24px;
  padding-right: 4px;
}
.filter-head h3 {
  font-size: 14px;
  font-weight: 400;
}
.filter-head .icon-btn {
  padding-top: 8px;
}
.drop {
  display: flex;
  align-items: center;
  justify-content: center;
  height: 58px;
  margin-top: 10px;
  border: 1px solid #bebbb8;
  border-radius: 2px;
  font-size: 14px;
}

.visualizations {
  width: 227px;
  flex: none;
  background: #f3f2f1;
  border-left: 1px solid #e1dfdd;
  border-right: 1px solid #d6d5d4;
}
.visualizations .pane-head {
  padding: 0 10px;
}
.build-title {
  padding-left: 10px;
  font-size: 14px;
  line-height: 16px;
  font-weight: 600;
}
.modes {
  display: flex;
  gap: 43px;
  padding: 6px 10px 0;
}
.mode {
  display: flex;
  align-items: center;
  justify-content: center;
  width: 40px;
  height: 40px;
  border-radius: 3px;
}
.mode.selected {
  background: #d2d0ce;
}
.notch {
  display: flex;
  align-items: flex-end;
  margin-top: 6px;
}
.rule {
  flex: 1;
  height: 1px;
  background: #8a8886;
}
.rule.first {
  flex: 0 0 20px;
}
.gallery {
  display: grid;
  grid-template-columns: repeat(6, 24px);
  gap: 11px;
  padding: 14px 0 0 14px;
}

.data-pane {
  flex: 0 0 25px;
  overflow: hidden;
  background: #f3f2f1;
}
.data-pane h2 {
  padding-left: 11px;
  font-size: 18px;
  line-height: 50px;
  font-weight: 600;
}
.data-search {
  display: flex;
  align-items: center;
  width: 200px;
  height: 30px;
  margin: 7px 0 0 5px;
  padding-left: 14px;
  background: #fff;
  border: 1px solid #c8c6c4;
  border-bottom-color: #8a8886;
  border-radius: 4px;
}
.data-search input {
  flex: 1;
  border: 0;
}
.expand {
  display: block;
  margin: 22px 0 0 16px;
}
.expand.later {
  margin-top: 230px;
}
.overlay {
  position: absolute;
  right: 0;
  bottom: 0;
  width: 275px;
  height: 218px;
  z-index: 2;
  background: #3b3a39;
  border-top-left-radius: 8px;
}
</style>
